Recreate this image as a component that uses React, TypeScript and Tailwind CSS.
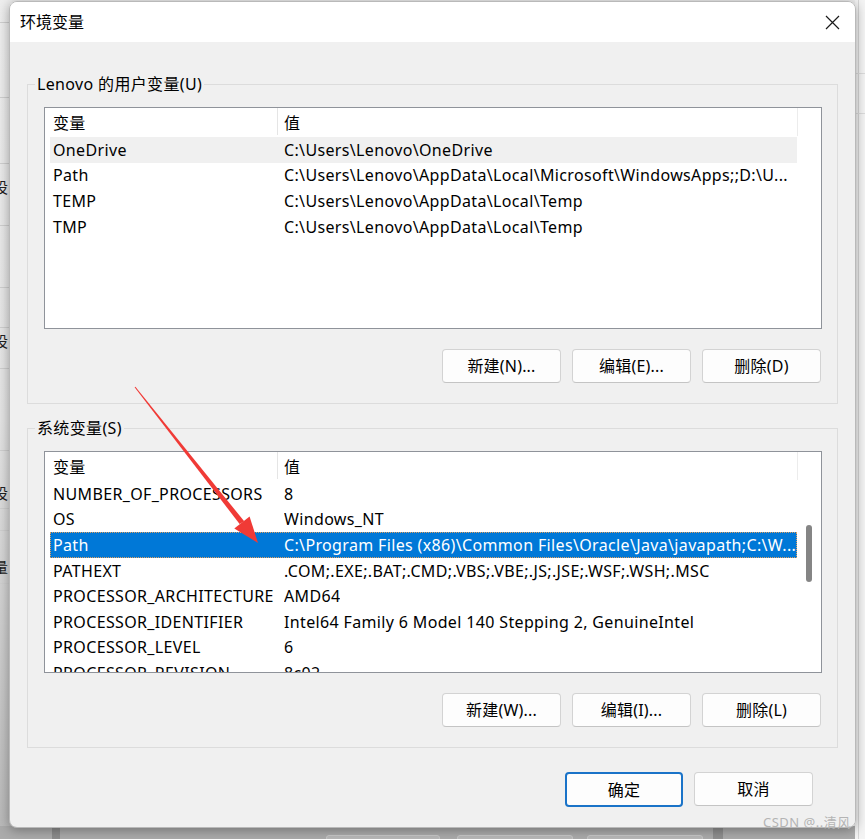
import React from 'react';

type Row = { name: string; value: string; selected?: boolean; hover?: boolean };

const userVars: Row[] = [
  { name: 'OneDrive', value: 'C:\\Users\\Lenovo\\OneDrive', hover: true },
  { name: 'Path', value: 'C:\\Users\\Lenovo\\AppData\\Local\\Microsoft\\WindowsApps;;D:\\U...' },
  { name: 'TEMP', value: 'C:\\Users\\Lenovo\\AppData\\Local\\Temp' },
  { name: 'TMP', value: 'C:\\Users\\Lenovo\\AppData\\Local\\Temp' },
];

const sysVars: Row[] = [
  { name: 'NUMBER_OF_PROCESSORS', value: '8' },
  { name: 'OS', value: 'Windows_NT' },
  { name: 'Path', value: 'C:\\Program Files (x86)\\Common Files\\Oracle\\Java\\javapath;C:\\W...', selected: true },
  { name: 'PATHEXT', value: '.COM;.EXE;.BAT;.CMD;.VBS;.VBE;.JS;.JSE;.WSF;.WSH;.MSC' },
  { name: 'PROCESSOR_ARCHITECTURE', value: 'AMD64' },
  { name: 'PROCESSOR_IDENTIFIER', value: 'Intel64 Family 6 Model 140 Stepping 2, GenuineIntel' },
  { name: 'PROCESSOR_LEVEL', value: '6' },
  { name: 'PROCESSOR_REVISION', value: '8c02' },
];

function WinButton({ label, primary }: { label: string; primary?: boolean }) {
  return (
    <button
      type="button"
      className={
        primary
          ? 'w-[118px] h-[35px] rounded-[4px] bg-[#fdfdfd] border-2 border-[#1a73c8] text-[16px] tracking-[0.2px] text-black'
          : 'w-[119px] h-[34px] rounded-[4px] bg-[#fdfdfd] border border-[#d3d3d3] border-b-[#c4c4c4] text-[16px] tracking-[0.2px] text-black'
      }
    >
      {label}
    </button>
  );
}

function VarList({ rows, scroll }: { rows: Row[]; scroll?: boolean }) {
  return (
    <div className="h-[222px] border border-[#8f939a] bg-white flex overflow-hidden">
      <div className="flex-1 min-w-0 flex flex-col overflow-hidden">
        <div className="h-[29px] shrink-0 flex items-center">
          <div className="w-[232px] pl-[8px]">变量</div>
          <div className="w-px h-[27px] bg-[#e5e5e5] self-start" />
          <div className="pl-[6px]">值</div>
        </div>
        <div className="pl-[5px] flex flex-col">
          {rows.map((r) => (
            <div
              key={r.name + r.value}
              className={
                'h-[25.6px] shrink-0 flex items-center whitespace-nowrap ' +
                (r.selected
                  ? 'bg-[#0078d7] text-white outline-1 outline-dotted outline-[#e0a060] -outline-offset-1'
                  : r.hover
                  ? 'bg-[#f0f0f0]'
                  : '')
              }
            >
              <div className="w-[234px] pl-[3px] shrink-0">{r.name}</div>
              <div className="min-w-0 overflow-hidden">{r.value}</div>
            </div>
          ))}
        </div>
      </div>
      <div className="w-[24px] shrink-0 flex flex-col items-center">
        <div className="h-[28px] w-px bg-[#ececec] self-start" />
        {scroll && <div className="mt-[45px] w-[6px] h-[57px] rounded-full bg-[#858585]" />}
      </div>
    </div>
  );
}

function GroupBox({ title, rows, buttons, scroll, className }: { title: string; rows: Row[]; buttons: string[]; scroll?: boolean; className?: string }) {
  return (
    <fieldset className={'min-w-0 border border-[#dcdcdc] pl-[16px] pr-[15px] pb-[20px] ' + (className || '')}>
      <legend className="-ml-[9px] px-[2px] leading-[20px] text-black">{title}</legend>
      <div className="mt-[13px]">
        <VarList rows={rows} scroll={scroll} />
      </div>
      <div className="mt-[20px] flex justify-end gap-[11px] pr-px">
        {buttons.map((b) => (
          <WinButton key={b} label={b} />
        ))}
      </div>
    </fieldset>
  );
}

export default function App() {
  const font = { fontFamily: '"Noto Sans", "Noto Sans CJK SC", sans-serif' };
  return (
    <div className="relative w-[865px] h-[839px] overflow-hidden bg-[#ececec] text-[16px] tracking-[0.35px] text-black" style={font}>
      {/* window behind the dialog */}
      <div className="absolute left-0 top-0 w-[12px] h-[839px] bg-gradient-to-b from-[#eeeeee] via-[#e4e4e4] to-[#b8b8b8]">
        {[22, 97, 163, 225, 287, 327, 368, 450, 508, 530, 583, 623].map((y) => (
          <div key={y} className="absolute left-0 w-[12px] h-px bg-[#cfcfcf]" style={{ top: y }} />
        ))}
        <span className="absolute left-[-7px] top-[176px] text-[15px] text-[#222]">设</span>
        <span className="absolute left-[-7px] top-[330px] text-[15px] text-[#222]">设</span>
        <span className="absolute left-[-7px] top-[482px] text-[15px] text-[#222]">设</span>
        <span className="absolute left-[-7px] top-[556px] text-[15px] text-[#222]">量</span>
      </div>
      <div className="absolute left-0 top-[826px] w-[865px] h-[13px] bg-[#ababab]">
        <div className="absolute left-[52px] top-0 w-[8px] h-[13px] bg-[#8c8c8c]" />
        <div className="absolute left-[326px] top-[9px] w-[114px] h-[6px] border border-[#c8c8c8] rounded-[3px] bg-[#b8b8b8]" />
        <div className="absolute left-[457px] top-[9px] w-[116px] h-[6px] border border-[#c8c8c8] rounded-[3px] bg-[#b8b8b8]" />
        <div className="absolute left-[587px] top-[9px] w-[116px] h-[6px] border border-[#c8c8c8] rounded-[3px] bg-[#b8b8b8]" />
        <div className="absolute left-[713px] top-0 w-[10px] h-[13px] bg-[#8f8f8f]" />
      </div>
      <div className="absolute right-0 top-0 w-[10px] h-[839px] bg-[#f4f4f4]">
        <div className="absolute left-[3px] top-0 w-px h-[839px] bg-[#d6d6d6]" />
        <div className="absolute left-0 top-[73px] w-[10px] h-px bg-[#dcdcdc]" />
        <div className="absolute left-0 top-[113px] w-[10px] h-px bg-[#dcdcdc]" />
      </div>

      {/* dialog */}
      <div className="absolute left-[9px] top-[1px] w-[847px] h-[827px] rounded-[8px] border border-[#b9b9b9] overflow-hidden flex flex-col shadow-[0_2px_12px_rgba(0,0,0,0.35)]">
        <div className="h-[40px] shrink-0 bg-white flex items-center justify-between pl-[10px] pr-[15px]">
          <span className="text-[16px] tracking-normal">环境变量</span>
          <svg width="15" height="15" viewBox="0 0 15 15" className="mt-[1px]">
            <path d="M1 1 L14 14 M14 1 L1 14" stroke="#1a1a1a" strokeWidth="1.2" fill="none" />
          </svg>
        </div>
        <div className="flex-1 bg-[#f0f0f0] px-[17px] pt-[32px] flex flex-col">
          <GroupBox title="Lenovo 的用户变量(U)" rows={userVars} buttons={['新建(N)...', '编辑(E)...', '删除(D)']} />
          <GroupBox className="mt-[14px]" title="系统变量(S)" rows={sysVars} scroll buttons={['新建(W)...', '编辑(I)...', '删除(L)']} />
          <div className="mt-[24px] flex justify-end gap-[11px] pr-[25px]">
            <WinButton label="确定" primary />
            <WinButton label="取消" />
          </div>
        </div>
      </div>

      {/* red annotation arrow */}
      <svg className="absolute left-0 top-0 pointer-events-none" width="865" height="839" viewBox="0 0 865 839">
        <polygon points="134.6,387.3 135.4,386.7 244.2,521.3 239.6,524.0" fill="#f03a36" />
        <polygon points="258,543 234.3,528.6 241.9,522.6 249.6,516.6" fill="#f03a36" />
      </svg>

      <span className="absolute left-[763px] top-[813px] text-[13px] text-[#b4b4b4] tracking-[0.5px]">CSDN @..清风</span>
    </div>
  );
}
